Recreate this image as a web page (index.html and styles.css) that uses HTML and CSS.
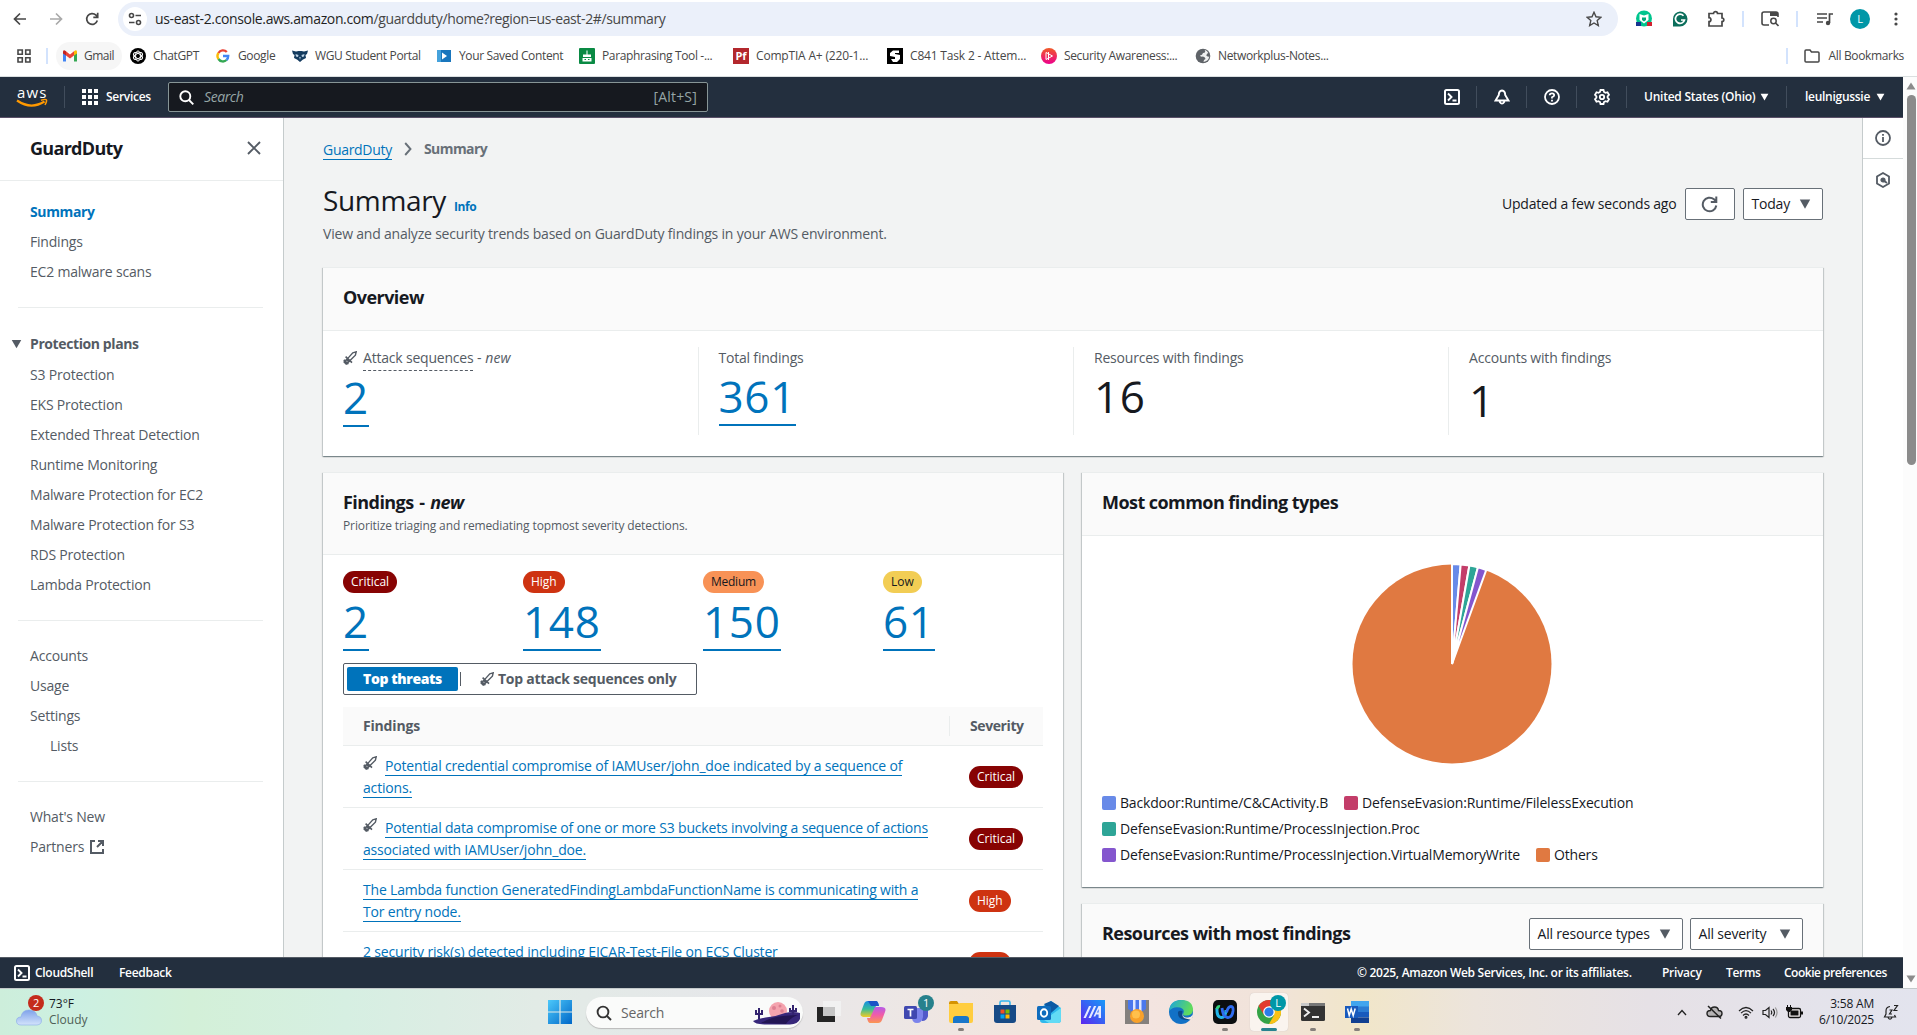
FILE: index.html
```html
<!DOCTYPE html>
<html lang="en">
<head>
<meta charset="utf-8">
<title>GuardDuty | us-east-2</title>
<link rel="stylesheet" href="styles.css">
</head>
<body>
<svg width="0" height="0" class="defs">
  <symbol id="sword" viewBox="0 0 14 14"><path d="M4.800 7.400 9.800 1.800 13.200.8l-.8 3.400L7 9.600" fill="none" stroke="#545b64" stroke-width="1.400"/><path d="M2.600 5.600l6.400 6M4.800 7.400 1.200 11l2 2L7 9.600M.8 8.800l4.600 4.400M5.800 10.800 3.200 8.200" fill="none" stroke="#545b64" stroke-width="1.600"/></symbol>
  <symbol id="caret" viewBox="0 0 12 10"><path d="M.8 .5h10.4L6 9.7z" fill="currentColor"/></symbol>
  <symbol id="shell" viewBox="0 0 16 16"><rect x="1" y="1" width="14" height="14" rx="1.5" fill="none" stroke="#fff" stroke-width="2"/><path d="M4 4.5 7.5 8 4 11.500M8.500 11.500h4" fill="none" stroke="#fff" stroke-width="1.900"/></symbol>
</svg>

<header class="browser">
  <div class="toolbar">
    <svg class="tb-back" width="14" height="14" viewBox="0 0 14 14"><path d="M13 7H2M7 1.500 1.500 7 7 12.500" fill="none" stroke="#474747" stroke-width="1.700"/></svg>
    <svg class="tb-fwd" width="14" height="14" viewBox="0 0 14 14"><path d="M1 7h11M7 1.500 12.500 7 7 12.500" fill="none" stroke="#a9a9a9" stroke-width="1.700"/></svg>
    <svg class="tb-reload" width="14" height="14" viewBox="0 0 14 14"><path d="M12.300 8.500A5.400 5.400 0 1 1 11 3.200L12.500 4.800M12.700 .8v4.500H8.300" fill="none" stroke="#474747" stroke-width="1.700"/></svg>
    <div class="urlbar">
      <span class="site"><svg width="14" height="14" viewBox="0 0 14 14" fill="none" stroke="#474747" stroke-width="1.600"><circle cx="3.500" cy="3.500" r="2"/><path d="M7.500 3.500H13M1 10.500h5.500"/><circle cx="10.500" cy="10.500" r="2"/></svg></span>
      <span class="url"><b>us-east-2.console.aws.amazon.com</b>/guardduty/home?region=us-east-2#/summary</span>
      <svg width="16" height="16" viewBox="0 0 16 16"><path d="m8 1.300 2 4.500 4.900.5-3.700 3.300 1.100 4.900L8 12l-4.300 2.500 1.100-4.900L1.100 6.300 6 5.800z" fill="none" stroke="#474747" stroke-width="1.400"/></svg>
    </div>
    <div class="exts">
      <svg width="18" height="18" viewBox="0 0 18 18"><circle cx="9" cy="8.500" r="8" fill="#00c58e"/><path d="M4.500 4 9 5.500 13.500 4v6L9 13.500 4.500 10z" fill="#fff"/><path d="M7 7.500h4v2.500L9 11.500 7 10z" fill="#00a87a"/><path d="M1 12h5v4H1z" fill="#17338f"/><path d="M12 12h5v4h-5z" fill="#d2202f"/></svg>
      <svg width="16" height="16" viewBox="0 0 16 16"><path d="M8 .5A7.500 7.500 0 1 1 8 15.500H1V8A7.500 7.500 0 0 1 8 .5z" fill="#0b6e5b"/><path d="M11.500 4.700A4.600 4.600 0 1 0 12.500 9H9" fill="none" stroke="#fff" stroke-width="1.700"/></svg>
      <svg width="18" height="18" viewBox="0 0 18 18"><path d="M2 3.500h4.500c0-2.600 4-2.600 4 0H15v4.500c2.400 0 2.400 3.500 0 3.500V16H2v-4.300c2.600 0 2.600-4 0-4z" fill="none" stroke="#474747" stroke-width="1.700"/></svg>
      <i></i>
      <svg width="18" height="16" viewBox="0 0 18 16"><path d="M8 14H3q-2 0-2-2V3q0-2 2-2h12q2 0 2 2v3" fill="none" stroke="#474747" stroke-width="1.600"/><path d="M9 1h8v4H9z" fill="#474747"/><circle cx="12.500" cy="10" r="2.700" fill="none" stroke="#474747" stroke-width="1.500"/><path d="m14.500 12 3 3" stroke="#474747" stroke-width="1.600"/></svg>
      <i></i>
      <svg class="media" width="16" height="14" viewBox="0 0 16 14"><path d="M0 2h10M0 6h10M0 10h6M12.500 11V2H16" fill="none" stroke="#474747" stroke-width="1.700"/><circle cx="11" cy="11" r="2.200" fill="#474747"/></svg>
      <span class="avatar">L</span>
      <svg width="4" height="14" viewBox="0 0 4 14" fill="#474747"><circle cx="2" cy="2" r="1.600"/><circle cx="2" cy="7" r="1.600"/><circle cx="2" cy="12" r="1.600"/></svg>
    </div>
  </div>
  <div class="bookmarks">
    <svg width="14" height="14" viewBox="0 0 14 14" fill="none" stroke="#474747" stroke-width="1.600"><path d="M1 1h4.300v4.300H1zM8.700 1H13v4.300H8.700zM1 8.700h4.300V13H1zM8.700 8.700H13V13H8.700z"/></svg>
    <i></i>
    <a class="hover"><svg width="16" height="16" viewBox="0 0 16 16"><path d="M1 4v9h3V7l4 3 4-3v6h3V4" fill="#fff"/><path d="M1 13.500V4l3 2.200v7.300z" fill="#4285f4"/><path d="M15 13.500V4l-3 2.200v7.300z" fill="#34a853"/><path d="M4 3.200l4 3.200 4-3.200v4.400L8 10.600 4 7.600z" fill="#ea4335"/><path d="M12 3.200q3-2 3 .8v1.500l-3 2.100z" fill="#fbbc04"/><path d="M4 3.200Q1 1.200 1 4v1.500l3 2.100z" fill="#c5221f"/></svg>Gmail</a>
    <a><svg width="16" height="16" viewBox="0 0 16 16"><circle cx="8" cy="8" r="8" fill="#000"/><g fill="none" stroke="#fff" stroke-width="1"><ellipse cx="8" cy="8" rx="2.400" ry="5"/><ellipse cx="8" cy="8" rx="2.400" ry="5" transform="rotate(60 8 8)"/><ellipse cx="8" cy="8" rx="2.400" ry="5" transform="rotate(120 8 8)"/></g></svg>ChatGPT</a>
    <a><svg width="16" height="16" viewBox="0 0 16 16" fill="none" stroke-width="2.400"><path d="M3.500 5A5.200 5.200 0 0 1 11.800 4" stroke="#ea4335"/><path d="M3.500 5a5.200 5.200 0 0 0 0 6" stroke="#fbbc05"/><path d="M3.500 11A5.200 5.200 0 0 0 11.500 12" stroke="#34a853"/><path d="M8 8h5.200q0 2.600-1.700 4" stroke="#4285f4"/></svg>Google</a>
    <a><svg width="16" height="16" viewBox="0 0 16 16"><path d="M0 2.500l4 1 2.500-.5h3l2.500.5 4-1-1 3.500-1.500 1L14 10l-3 1.500-3 2.500-3-2.500L2 10l.5-3L1 6z" fill="#143b5f"/><path d="M3.500 6l3 1-.5 2-2-.5zM12.500 6l-3 1 .5 2 2-.5zM7.300 9h1.400L8 12z" fill="#bcd3e6"/></svg>WGU Student Portal</a>
    <a><svg width="16" height="16" viewBox="0 0 16 16"><path d="M1 2h14v12H1z" fill="#1976bd"/><path d="M1 2h4v12H1z" fill="#45a2dc"/><path d="m6 4.500 5 3.500-5 3.500z" fill="#fff"/></svg>Your Saved Content</a>
    <a><svg width="16" height="16" viewBox="0 0 16 16"><rect width="16" height="16" rx="1" fill="#0a8a44"/><path d="M4 6.500h8v2.500H4zM3.500 10h9v3.500h-9zM7.500 2.500h1V7h-1z" fill="#fff"/><path d="M5.500 11h1.500v1H5.500zM9 11h1.500v1H9z" fill="#0a8a44"/></svg>Paraphrasing Tool -...</a>
    <a class="loose"><span class="fav-pf">Pf</span>CompTIA A+ (220-1...</a>
    <a class="loose"><svg width="16" height="16" viewBox="0 0 16 16"><path d="M0 0h16v16H0z" fill="#000"/><path d="M12 2.500H6L3 5v3l5 1v2H4l2 3h4l3-3V7L8 6V5h4z" fill="#fff"/></svg>C841 Task 2 - Attem...</a>
    <a><svg width="16" height="16" viewBox="0 0 16 16"><linearGradient id="ps" x2="0" y2="1"><stop stop-color="#f05a28"/><stop offset="1" stop-color="#ec008c"/></linearGradient><circle cx="8" cy="8" r="8" fill="url(#ps)"/><path d="m5 4.500 6.500 3.500L5 11.500zM7.500 4v8" fill="none" stroke="#fff" stroke-width="1"/></svg>Security Awareness:...</a>
    <a><svg width="16" height="16" viewBox="0 0 16 16"><circle cx="8" cy="8" r="7.300" fill="#5f6368"/><path d="M9.500 1.800q2 3-1.500 3.200-.5 2-3 2.500 0 1.500 3 1 2.500.5 2.500 2.500-2 .5-2 3 5-1 5.800-5.500-2 .5-3-1 .5-2.500 2-2.500Q12.300 2.500 9.500 1.800z" fill="#fff" opacity=".9"/></svg>Networkplus-Notes...</a>
    <i></i>
    <svg width="16" height="14" viewBox="0 0 16 14"><path d="M1 12V2q0-1 1-1h4l1.500 2H14q1 0 1 1v8q0 1-1 1H2q-1 0-1-1z" fill="none" stroke="#474747" stroke-width="1.500"/></svg>
    <span class="all">All Bookmarks</span>
  </div>
</header>

<div class="page">
  <div class="console">
    <nav class="awsnav">
      <svg class="logo" width="32" height="20" viewBox="0 0 32 20"><text x="1" y="10.500" class="logo-text" textLength="29">aws</text><path d="M1 13.500Q15 23 28.500 14.500" fill="none" stroke="#f90" stroke-width="2.200"/><path d="M25 13.200q5-1.500 5.500-.2t-1.500 5" fill="none" stroke="#f90" stroke-width="1.500"/></svg>
      <i class="d1"></i>
      <svg class="apps" width="16" height="16" viewBox="0 0 16 16" fill="#fff"><path d="M0 0h4v4H0zM6 0h4v4H6zM12 0h4v4h-4zM0 6h4v4H0zM6 6h4v4H6zM12 6h4v4h-4zM0 12h4v4H0zM6 12h4v4H6zM12 12h4v4h-4z"/></svg>
      <span class="services">Services</span>
      <div class="search">
        <svg width="15" height="15" viewBox="0 0 15 15" fill="none" stroke="#fff" stroke-width="1.900"><circle cx="6.300" cy="6.300" r="5"/><path d="m10 10 4.300 4.300"/></svg>
        <em>Search</em><span>[Alt+S]</span>
      </div>
      <div class="navicons">
        <span><svg width="16" height="16"><use href="#shell"/></svg></span>
        <span><svg width="16" height="16" viewBox="0 0 16 16" fill="none" stroke="#fff" stroke-width="1.900"><path d="M8 1.500Q4.800 2 4.800 6L1.500 11.500h13L11.200 6Q11.200 2 8 1.500zM5.800 12v1q2.200 3.300 4.400 0v-1"/></svg></span>
        <span><svg width="16" height="16" viewBox="0 0 16 16" fill="none" stroke="#fff" stroke-width="1.800"><circle cx="8" cy="8" r="7"/><path d="M5.700 6.300Q5.800 4.300 8 4.300T10.200 6.300Q10.200 7.300 8 8.300V9.500M8 10.800v1.600"/></svg></span>
        <span><svg width="16" height="16" viewBox="0 0 16 16" fill="none" stroke="#fff" stroke-width="1.800"><path d="M6.500 1h3l.5 2 1.500.8 2-.6L15 5.800 13.600 7.300v1.400L15 10.200l-1.500 2.600-2-.6-1.500.8-.5 2h-3L6 13l-1.500-.8-2 .6L1 10.200 2.400 8.700V7.300L1 5.800l1.500-2.600 2 .6L6 3z"/><circle cx="8" cy="8" r="2.200"/></svg></span>
      </div>
      <span class="region">United States (Ohio)<svg width="9" height="8"><use href="#caret"/></svg></span>
      <span class="user">leulnigussie<svg width="9" height="8"><use href="#caret"/></svg></span>
    </nav>

    <div class="body">
      <aside class="sidebar">
        <div class="side-head">GuardDuty<svg width="14" height="14" viewBox="0 0 14 14"><path d="m1 1 12 12M13 1 1 13" stroke="#545b64" stroke-width="1.900"/></svg></div>
        <ul class="first"><li class="current">Summary</li><li>Findings</li><li>EC2 malware scans</li></ul>
        <hr>
        <div class="group"><svg width="11" height="10"><use href="#caret"/></svg>Protection plans</div>
        <ul><li>S3 Protection</li><li>EKS Protection</li><li>Extended Threat Detection</li><li>Runtime Monitoring</li><li>Malware Protection for EC2</li><li>Malware Protection for S3</li><li>RDS Protection</li><li>Lambda Protection</li></ul>
        <hr>
        <ul class="spaced"><li>Accounts</li><li>Usage</li><li>Settings</li><li class="sub">Lists</li></ul>
        <hr>
        <ul class="spaced"><li>What's New</li><li>Partners<svg width="14" height="14" viewBox="0 0 14 14" fill="none" stroke="#545b64" stroke-width="2"><path d="M5 1H1v12h12V9M8 1h5v5M13 1 7 7"/></svg></li></ul>
      </aside>

      <main>
        <div class="crumbs"><a>GuardDuty</a><svg width="8" height="14" viewBox="0 0 8 14"><path d="m1.200 1 5.300 6-5.300 6" fill="none" stroke="#687078" stroke-width="1.900"/></svg><b>Summary</b></div>
        <div class="titlebar">
          <div>
            <h1>Summary <a>Info</a></h1>
            <p>View and analyze security trends based on GuardDuty findings in your AWS environment.</p>
          </div>
          <div class="actions">
            <span>Updated a few seconds ago</span>
            <button class="refresh"><svg width="17" height="17" viewBox="0 0 17 17" fill="none" stroke="#545b64" stroke-width="2"><path d="M15.300 9.500A6.800 6.800 0 1 1 13 3.300L15 5.300M15.300 .5v5.500H9.800"/></svg></button>
            <button class="today">Today<svg width="12" height="10"><use href="#caret"/></svg></button>
          </div>
        </div>

        <section class="card overview">
          <h2>Overview</h2>
          <div class="stats">
            <div><label><svg width="14" height="14"><use href="#sword"/></svg><u>Attack sequences</u>&nbsp;-&nbsp;<em>new</em></label><a class="num">2</a></div>
            <div><label>Total findings</label><a class="num up">361</a></div>
            <div><label>Resources with findings</label><span class="num up">16</span></div>
            <div><label>Accounts with findings</label><span class="num down">1</span></div>
          </div>
        </section>

        <div class="columns">
          <section class="card findings">
            <div class="fhead"><h2>Findings - <em>new</em></h2><p>Prioritize triaging and remediating topmost severity detections.</p></div>
            <div class="fbody">
              <div class="sev">
                <div><span class="badge critical">Critical</span><a class="num">2</a></div>
                <div><span class="badge high">High</span><a class="num">148</a></div>
                <div><span class="badge medium">Medium</span><a class="num">150</a></div>
                <div><span class="badge low">Low</span><a class="num">61</a></div>
              </div>
              <div class="toggle"><b>Top threats</b><i></i><span><svg width="14" height="14"><use href="#sword"/></svg>Top attack sequences only</span></div>
              <div class="table">
                <div class="row th"><span>Findings</span><span>Severity</span></div>
                <div class="row"><span><svg width="14" height="14"><use href="#sword"/></svg><a>Potential credential compromise of IAMUser/john_doe indicated by a sequence of<br>actions.</a></span><span><i class="badge critical">Critical</i></span></div>
                <div class="row"><span><svg width="14" height="14"><use href="#sword"/></svg><a>Potential data compromise of one or more S3 buckets involving a sequence of actions<br>associated with IAMUser/john_doe.</a></span><span><i class="badge critical">Critical</i></span></div>
                <div class="row"><span><a>The Lambda function GeneratedFindingLambdaFunctionName is communicating with a<br>Tor entry node.</a></span><span><i class="badge high">High</i></span></div>
                <div class="row"><span><a>2 security risk(s) detected including EICAR-Test-File on ECS Cluster</a></span><span><i class="badge high">High</i></span></div>
              </div>
            </div>
          </section>

          <div class="rightcol">
            <section class="card types">
              <h2>Most common finding types</h2>
              <svg class="pie" width="202" height="202" viewBox="-101 -101 202 202" stroke="#fff" stroke-width="2">
                <circle r="99.500" fill="#e07941" stroke="none"/>
                <path d="M0 0V-100A100 100 0 0 1 8.700-99.600z" fill="#688ae8"/>
                <path d="M0 0 8.700-99.600A100 100 0 0 1 17.400-98.500z" fill="#c33d69"/>
                <path d="M0 0 17.400-98.500A100 100 0 0 1 25.900-96.600z" fill="#2ea597"/>
                <path d="M0 0 25.900-96.600A100 100 0 0 1 34.200-94z" fill="#8456ce"/>
              </svg>
              <div class="legend">
                <span><i class="c1"></i>Backdoor:Runtime/C&amp;CActivity.B</span><span><i class="c2"></i>DefenseEvasion:Runtime/FilelessExecution</span>
                <span class="full"><i class="c3"></i>DefenseEvasion:Runtime/ProcessInjection.Proc</span>
                <span><i class="c4"></i>DefenseEvasion:Runtime/ProcessInjection.VirtualMemoryWrite</span><span><i class="c5"></i>Others</span>
              </div>
            </section>
            <section class="card resources">
              <h2>Resources with most findings</h2>
              <button class="rt">All resource types<svg width="12" height="10"><use href="#caret"/></svg></button>
              <button class="as">All severity<svg width="12" height="10"><use href="#caret"/></svg></button>
            </section>
          </div>
        </div>
      </main>

      <aside class="tools">
        <span><svg width="16" height="16" viewBox="0 0 16 16" fill="none" stroke="#545b64" stroke-width="1.800"><circle cx="8" cy="8" r="7"/><path d="M8 7v5M8 4v1.700"/></svg></span>
        <span><svg width="16" height="16" viewBox="0 0 16 16" fill="none" stroke="#545b64" stroke-width="1.800"><path d="M8 1l6 3.400v7.200L8 15l-6-3.400V4.400z"/><circle cx="8" cy="8" r="1.700" fill="#545b64"/><path d="m8 8 4 3"/></svg></span>
      </aside>
    </div>

    <footer>
      <svg width="16" height="16"><use href="#shell"/></svg>
      <span class="cs">CloudShell</span><span class="fb">Feedback</span>
      <span class="copy">© 2025, Amazon Web Services, Inc. or its affiliates.</span><span class="pr">Privacy</span><span class="te">Terms</span><span class="ck">Cookie preferences</span>
    </footer>
  </div>
  <div class="scrollbar">
    <svg width="10" height="8" viewBox="0 0 10 8"><path d="M5 0.500 9.500 7.500H.5z" fill="#8b8b8b"/></svg>
    <div></div>
    <svg class="dn" width="10" height="8" viewBox="0 0 10 8"><path d="M5 7.500.5.500h9z" fill="#8b8b8b"/></svg>
  </div>
</div>

<div class="taskbar">
  <div class="weather">
    <div class="wicon"><svg width="26" height="18" viewBox="0 0 26 18"><linearGradient id="cl" x2="0" y2="1"><stop stop-color="#7fa2ea"/><stop offset="1" stop-color="#d3e3fb"/></linearGradient><path d="M5 17q-4.500 0-4.500-4T5 9q1-7 8-7t8 6q4.500.5 4.500 4.500T21 17z" fill="url(#cl)" stroke="#86a8ea" stroke-width=".6"/></svg><span>2</span></div>
    <p>73°F<br><small>Cloudy</small></p>
  </div>
  <svg class="win" width="24" height="24" viewBox="0 0 24 24"><linearGradient id="w" x2="1" y2="1"><stop stop-color="#4cc8fa"/><stop offset="1" stop-color="#0067c8"/></linearGradient><path d="M0 0h11.400v11.400H0zM12.600 0H24v11.400H12.600zM0 12.600h11.400V24H0zM12.600 12.600H24V24H12.600z" fill="url(#w)"/></svg>
  <div class="tsearch">
    <svg width="16" height="16" viewBox="0 0 16 16" fill="none" stroke="#333" stroke-width="1.900"><circle cx="7" cy="7" r="5.400"/><path d="m11 11 4 4"/></svg>
    <span>Search</span>
    <svg width="48" height="24" viewBox="0 0 48 24"><circle cx="25" cy="10" r="9" fill="#f4a3ae"/><circle cx="21" cy="7" r="2" fill="#dd7f92"/><circle cx="27" cy="5" r="1.500" fill="#dd7f92"/><circle cx="29" cy="10" r="1.800" fill="#dd7f92"/><path d="M0 20q8-3 16-4T32 12q8-2 15 0v6q-2 5-10 5.500H14Q2 23.500 0 20z" fill="#37277a"/><path d="M8 22q10-6 22-7t15-1q-8 3-12 9z" fill="#221553"/><path d="M6 18V7M3 9v4h6V9M40 14V4M37 7v3h6V7" fill="none" stroke="#33246f" stroke-width="2"/></svg>
  </div>
  <div class="apps-row">
    <span><svg width="24" height="24" viewBox="0 0 24 24"><path d="M0 7h18v15H0z" fill="#242424"/><path d="M6 1h18v15H6z" fill="#f1f1f1"/><path d="M6 7h12v9H6z" fill="#c5c5c5"/></svg></span>
    <span><svg width="26" height="24" viewBox="0 0 26 24"><linearGradient id="ca" x2="0" y2="1"><stop stop-color="#168de2"/><stop offset=".5" stop-color="#37bd9a"/><stop offset="1" stop-color="#f3cb24"/></linearGradient><linearGradient id="cb" x2="0" y2="1"><stop stop-color="#b55be8"/><stop offset=".5" stop-color="#f15ca8"/><stop offset="1" stop-color="#fb9750"/></linearGradient><path d="M8 1h8q2 0 3 5h-3l-5 11H5q-6 0-4-5L4 4q1-3 4-3z" fill="url(#ca)"/><path d="M18 23h-8q-2 0-3-5h3l5-11h6q6 0 4 5l-3 8q-1 3-4 3z" fill="url(#cb)"/><path d="M8 1h8q2 0 3 5h-8z" fill="#1a53c6"/></svg></span>
    <span class="teams"><svg width="26" height="24" viewBox="0 0 26 24"><path d="M15 8h9v8q-1 5-6 5z" fill="#5059c9"/><path d="M8 8h11v9q-1 6-6 6t-5-6z" fill="#7b83eb"/><rect y="6" width="13" height="13" rx="1.500" fill="#4048b0"/><path d="M3.500 9.500h6M6.500 9.500v7" stroke="#fff" stroke-width="1.700"/></svg><em class="bdg">1</em></span>
    <span class="run"><svg width="24" height="24" viewBox="0 0 24 24"><path d="M0 3q0-2 2-2h6l2 3H0z" fill="#d59300"/><path d="M0 4h9l2-1h13v18q0 2-2 2H2q-2 0-2-2z" fill="#ffcd3f"/><path d="M4 23v-4q0-3 3-3h10q3 0 3 3v4z" fill="#1876c9"/></svg></span>
    <span><svg width="24" height="24" viewBox="0 0 24 24"><path d="M7 6V2.500Q7 1 8.500 1h7Q17 1 17 2.500V6" fill="none" stroke="#35b6ef" stroke-width="1.600"/><path d="M1 5h22v15q0 3-3 3H4q-3 0-3-3z" fill="#164a86"/><path d="M7.500 9.500h4v4h-4z" fill="#f25022"/><path d="M12.500 9.500h4v4h-4z" fill="#7fba00"/><path d="M7.500 14.500h4v4h-4z" fill="#00a4ef"/><path d="M12.500 14.500h4v4h-4z" fill="#ffb900"/></svg></span>
    <span><svg width="24" height="24" viewBox="0 0 24 24"><path d="M3 8 14 1l10 7v12q0 3-3 3H6q-3 0-3-3z" fill="#2fb9ec"/><path d="m7 4 7-3 8 5-8 7z" fill="#0c59a4"/><path d="m24 8-17 12 5 3h9q3 0 3-3z" fill="#62dbf5"/><rect y="6" width="14" height="14" rx="1.500" fill="#0f6cbd"/><ellipse cx="7" cy="13" rx="3.200" ry="3.700" fill="none" stroke="#fff" stroke-width="1.900"/></svg></span>
    <span><svg width="24" height="24" viewBox="0 0 24 24"><linearGradient id="my" x1="1" x2="0" y2="1"><stop stop-color="#169af8"/><stop offset="1" stop-color="#5b25ee"/></linearGradient><path d="M0 0h24v24H0z" fill="url(#my)"/><path d="M2.500 18 8 6h2.300L4.800 18zM7.500 18 13 6h2.300L9.800 18zM12.500 16.500 17.500 6H20v12h-2.400v-3.500h-2.400l-.9 2zM16 12.500h1.600V9z" fill="#e6eaff"/></svg></span>
    <span><svg width="24" height="24" viewBox="0 0 24 24"><path d="M0 0h24v24H0z" fill="#84807d"/><path d="M3 0h18v9l-5 3H8L3 9z" fill="#4b78ec"/><path d="M8 0h2.500v11H8zM14 0h2.500v11H14z" fill="#dfe8ff"/><circle cx="12" cy="16" r="7" fill="#f8a12a"/><circle cx="11" cy="14.500" r="4" fill="#ffc04c"/></svg></span>
    <span><svg width="24" height="24" viewBox="0 0 24 24"><linearGradient id="eg" x2="1" y2=".3"><stop stop-color="#1ba3df"/><stop offset="1" stop-color="#61dc5b"/></linearGradient><circle cx="12" cy="12" r="12" fill="#1271c6"/><path d="M0 11Q1 0 12.500 0T24 10.500Q23 16 16 15.500q-3-.5-1.500-2.500Q16 9 11 7.500 4 6 0 11z" fill="url(#eg)"/><path d="M9 12q-1 9 12 8l2.500-3Q21 18 18 17.500 12 17 13.500 11 10 10 9 12z" fill="#0b4a8c"/><path d="M14 13q-1 5 5 4.500 3-.2 5-3l-1.500 5.500-4-1Q12 18 14 13z" fill="#f2e9e3"/></svg></span>
    <span class="run"><svg width="24" height="24" viewBox="0 0 24 24"><rect width="24" height="24" rx="5" fill="#0b0e10"/><path d="M4 8q-.5 9 4 9.500T13 10" fill="none" stroke="#22b5ea" stroke-width="3"/><path d="M9 8q1 9 5.500 9.500Q19 18 20 11q.5-4.500-2-4.500-3 0-4.500 6" fill="none" stroke="#2f6cf0" stroke-width="2.800"/><path d="M4 9q.5-3 3-2.500" fill="none" stroke="#35cf77" stroke-width="2.800"/></svg></span>
    <span class="run active"><svg width="24" height="24" viewBox="0 0 24 24"><circle cx="12" cy="12" r="12" fill="#34a346"/><path d="M1.600 6A12 12 0 0 1 22.400 6H12z" fill="#e23b2e"/><path d="M1.600 6 7 15l5-9z" fill="#e23b2e"/><path d="M22.400 6A12 12 0 0 1 12 24l5.200-9L12 6z" fill="#fbc116"/><circle cx="12" cy="12" r="5.800" fill="#fff"/><circle cx="12" cy="12" r="4.600" fill="#2b7de9"/></svg><em class="bdg lt">L</em></span>
    <span class="run"><svg width="24" height="20" viewBox="0 0 24 20"><rect y="1" width="24" height="18" rx="1.500" fill="#333"/><path d="M0 1h8v3H0z" fill="#c9c9c9"/><path d="M8 1h16v3H8z" fill="#777"/><path d="m3 6.500 5 4-5 4M11 15h7" fill="none" stroke="#eee" stroke-width="1.900"/></svg></span>
    <span class="run"><svg width="24" height="24" viewBox="0 0 24 24"><path d="M6 1h18v6H6z" fill="#41a5ee"/><path d="M6 6.500h18V12H6z" fill="#2b7cd3"/><path d="M6 12h18v5.500H6z" fill="#185abd"/><path d="M6 17.500h18V23H6z" fill="#103f91"/><path d="M0 6h13v12H0z" fill="#185abd"/><path d="m2.500 8.500 1.700 7 2-6.500 2 6.500 2-7" fill="none" stroke="#fff" stroke-width="1.500"/></svg></span>
  </div>
  <div class="tray">
    <svg width="10" height="7" viewBox="0 0 10 7"><path d="m1 6 4-4.500L9 6" fill="none" stroke="#222" stroke-width="1.300"/></svg>
    <svg class="t2" width="17" height="14" viewBox="0 0 17 14"><path d="M4.500 11.500Q1 11.500 1 8.500t3.500-3Q5 2 8.500 2t4 3.500q3.500 0 3.500 3t-3 3z" fill="#b5b3b4" stroke="#222" stroke-width="1.400"/><path d="m2 1 13 12.500" stroke="#222" stroke-width="1.500"/></svg>
    <svg class="t3" width="16" height="13" viewBox="0 0 16 13" fill="none" stroke="#222" stroke-width="1.200"><path d="M1 5q7-7 14 0M3 7.200q5-5 10 0M5 9.500q3-3 6 0"/><circle cx="8" cy="11.300" r=".9"/></svg>
    <svg class="t4" width="16" height="13" viewBox="0 0 16 13" fill="none" stroke="#222" stroke-width="1.200"><path d="M1 4.500h2.500L7 1.500v10L3.500 8.500H1zM9 4.500q1.500 2 0 4M11 3q3 3.500 0 7"/><path d="M13.300 1.500q3.500 5 0 10" stroke="#999"/></svg>
    <svg class="t5" width="17" height="14" viewBox="0 0 17 14"><rect x="2.500" y="3.500" width="12" height="9" rx="1.500" fill="#f3eeee" stroke="#111" stroke-width="1.300"/><path d="M4.500 5.500h8v5h-8z" fill="#111"/><path d="M15 6.500h2v3h-2zM0 2h6v3L4 7H2L0 5zM1 0h1v2H1zM4 0h1v2H4z" fill="#111"/></svg>
    <p>3:58 AM<br>6/10/2025</p>
    <svg class="t6" width="16" height="17" viewBox="0 0 16 17" fill="none" stroke="#222" stroke-width="1.200"><path d="M7 2.500Q3 3 3 7v3l-1.500 3h11L11.500 11M5 13.500q2 3.500 4 0M6.500 6H9L6.500 10H9M11 1.500h3.500L11 6.500h3.500"/></svg>
  </div>
</div>
</body>
</html>
```
FILE: styles.css
```css
* { box-sizing: border-box; }
body { margin: 0; width: 1917px; height: 1035px; overflow: hidden; font: 14px/22px "Open Sans", sans-serif; letter-spacing: -.2px; color: #16191f; background: #fff; display: flex; flex-direction: column; }
svg { display: block; flex: none; }
span, a { white-space: nowrap; }
h1, h2, p, ul, hr { margin: 0; padding: 0; }
.defs { position: absolute; }
i { font-style: normal; }

/* browser chrome */
.browser { height: 77px; flex: none; border-bottom: 1px solid #dadfe0; font-size: 12px; letter-spacing: -.35px; color: #474747; }
.toolbar { height: 38px; display: flex; align-items: center; padding-left: 13px; }
.tb-fwd { margin-left: 22px; }
.tb-reload { margin-left: 22px; }
.urlbar { margin-left: 19px; width: 1500px; height: 34px; border-radius: 17px; background: #ebf0fa; display: flex; align-items: center; padding: 0 16px 0 5px; }
.site { width: 24px; height: 24px; border-radius: 50%; background: #fff; display: grid; place-items: center; }
.url { flex: 1; margin-left: 8px; font-size: 14px; letter-spacing: -.36px; }
.url b { font-weight: 400; color: #1f1f1f; }
.exts { display: flex; align-items: center; padding-left: 17px; }
.exts svg + svg { margin-left: 19px; }
.exts i { width: 2px; height: 16px; background: #d3e3fd; margin: 0 17px; }
.exts .media { margin-left: 2px; }
.avatar { width: 20px; height: 20px; border-radius: 50%; background: #0097a7; color: #fff; text-align: center; line-height: 20px; font-size: 11px; margin: 0 24px 0 17px; }
.bookmarks { height: 36px; display: grid; align-items: center; grid-template-columns: 34px 9px 75px 85px 77px 144px 143px 154px 154px 154px 154px 591px 18px 16px 1fr; padding-left: 12px; }
.bookmarks > svg:first-child { margin-left: 5px; }
.bookmarks > i { width: 2px; height: 16px; background: #d3e3fd; }
.bookmarks a { display: flex; align-items: center; gap: 7px; height: 28px; }
.bookmarks a svg { width: 16px; }
.bookmarks .hover { background: #f6f6f6; border-radius: 14px; width: 66px; margin-left: 1px; padding-left: 6px; gap: 6px; letter-spacing: -.5px; }
.bookmarks .loose { letter-spacing: -.18px; }
.all { text-align: right; padding-right: 13px; }
.fav-pf { width: 16px; height: 16px; background: #b3282d; color: #fff; font-weight: 700; font-size: 11px; line-height: 15px; text-align: center; }

/* page frame */
.page { height: 911px; display: flex; flex: none; }
.console { width: 1903px; display: flex; flex-direction: column; }
.scrollbar { width: 14px; background: #fcfcfc; display: flex; flex-direction: column; align-items: center; padding: 5px 0 5px 2px; }
.scrollbar div { width: 9px; height: 370px; border-radius: 5px; background: #8b8b8b; margin-top: 5px; }
.scrollbar .dn { margin-top: auto; }

/* AWS navigation */
.awsnav { height: 41px; flex: none; background: #232f3e; border-bottom: 1px solid #5a5068; display: flex; align-items: center; color: #fff; font-size: 12px; font-weight: 600; letter-spacing: -.28px; }
.logo { margin-left: 16px; overflow: visible; }
.logo-text { font: 500 15px "Open Sans", sans-serif; fill: #fff; }
.awsnav i { width: 1px; height: 22px; background: #414d5c; margin: 0 17px 0 16px; }
.services { width: 62px; padding-left: 8px; }
.search { margin-left: 8px; width: 540px; height: 30px; background: #16191f; border: 1px solid #879596; border-radius: 2px; display: flex; align-items: center; padding: 0 10px; font-weight: 400; font-size: 14px; color: #95a5a6; letter-spacing: -.2px; }
.search em { margin-left: 10px; flex: 1; letter-spacing: -.4px; }
.search span { letter-spacing: .2px; }
.navicons { display: flex; margin-left: auto; }
.navicons span { width: 50px; height: 22px; border-right: 1px solid #414d5c; display: grid; place-items: center; }
.region, .user { display: flex; align-items: center; justify-content: space-between; height: 22px; }
.region { width: 160px; padding: 0 17px; border-right: 1px solid #414d5c; letter-spacing: -.25px; }
.user { width: 116px; padding: 0 18px; }

.body { flex: 1; min-height: 0; display: flex; background: #f2f3f3; }
.sidebar { width: 284px; flex: none; background: #fff; border-right: 1px solid #c5cbcc; color: #545b64; }
.side-head { height: 63px; border-bottom: 1px solid #eaeded; display: flex; align-items: center; justify-content: space-between; padding: 0 22px 2px 30px; font-size: 18px; font-weight: 700; letter-spacing: -.7px; color: #16191f; }
.sidebar ul { list-style: none; }
.sidebar li { height: 30px; line-height: 30px; padding-left: 30px; display: flex; align-items: center; gap: 6px; }
.sidebar .first { padding: 16px 0 20px; }
.sidebar .spaced { padding: 20px 0; }
.sidebar .sub { padding-left: 50px; }
.sidebar .current { color: #0073bb; font-weight: 700; letter-spacing: -.35px; }
.sidebar hr { border: 0; height: 1px; background: #eaeded; margin: 0 20px 0 18px; }
.group { display: flex; align-items: center; gap: 8px; padding-left: 11px; margin-top: 25px; height: 22px; margin-bottom: 5px; font-weight: 700; letter-spacing: -.4px; }
.group + ul { padding-bottom: 20px; }

main { flex: 1; min-width: 0; overflow: hidden; padding: 0 39.5px 0 39px; }
main a, .row a { color: #0073bb; }
.crumbs { display: flex; align-items: center; height: 22px; margin-top: 20px; color: #687078; }
.crumbs a { border-bottom: 1px solid #0073bb; line-height: 19px; padding-top: 1px; letter-spacing: -.3px; }
.crumbs svg { margin: 0 12px; }
.crumbs b { letter-spacing: -.55px; }
.titlebar { display: flex; justify-content: space-between; margin-top: 22px; }
h1 { font-size: 28px; line-height: 36px; height: 36px; font-weight: 400; letter-spacing: -.35px; }
h1 a { font-size: 12px; font-weight: 700; margin-left: 1px; }
.titlebar p { line-height: 22px; color: #545b64; padding-top: 5px; }
.actions { display: flex; align-items: center; height: 32px; margin-top: 6px; }
.actions > span { padding-bottom: 1px; }
button { font: inherit; letter-spacing: inherit; color: #16191f; background: #fff; border: 1px solid #687078; border-radius: 2px; height: 32px; display: flex; align-items: center; justify-content: space-between; padding: 0 11px 0 8px; white-space: nowrap; }
button svg { color: #545b64; }
.refresh { width: 50px; margin: 0 8px; padding: 0; justify-content: center; }
.today { width: 80px; }

.card { background: #fff; border-top: 1px solid #eaeded; box-shadow: 0 1px 1px 0 rgba(0,28,36,.3), 1px 1px 1px 0 rgba(0,28,36,.15), -1px 1px 1px 0 rgba(0,28,36,.15); }
h2 { font-size: 18px; line-height: 22px; letter-spacing: -.55px; font-weight: 700; }
.overview > h2, .types > h2 { height: 63px; padding: 17.500px 20px; background: #fafafa; border-bottom: 1px solid #eaeded; }
.overview { margin-top: 22px; height: 189px; }
.stats { display: grid; grid-template-columns: 375.5px 375.5px 375px 1fr; padding-top: 16px; }
.stats > div { height: 88px; padding-left: 20px; border-right: 1px solid #eaeded; display: flex; flex-direction: column; align-items: flex-start; }
.stats > div:last-child { border: 0; }
label { display: flex; align-items: center; color: #545b64; height: 22px; white-space: nowrap; }
label svg { margin-right: 6px; }
label em { letter-spacing: .2px; margin-left: .5px; }
label u { text-decoration: none; border-bottom: 1px dashed #545b64; height: 24px; margin-top: 2px; }
.num { display: block; font-size: 44px; line-height: 44px; letter-spacing: .7px; border-bottom: 2px solid currentColor; height: 52px; margin-top: 6px; }
.num.up { margin-top: 5px; }
.num.down { margin-top: 9px; }
span.num { border: 0; }

.columns { display: grid; grid-template-columns: 740px 740.5px; justify-content: space-between; margin-top: 16px; }
.findings { height: 700px; }
.fhead { height: 82px; background: #fafafa; border-bottom: 1px solid #eaeded; padding: 17.500px 20px 0; }
.fhead h2 { word-spacing: 1.500px; }
.fhead p { font-size: 12px; color: #545b64; margin-top: 2px; letter-spacing: -.12px; }
.fbody { padding: 16px 20px; }
.sev { display: grid; grid-template-columns: repeat(4, 180px); }
.sev > div { display: flex; flex-direction: column; align-items: flex-start; }
.sev .num { margin-top: 6px; }
.badge { display: inline-block; height: 22px; line-height: 22px; border-radius: 11px; padding: 0 8px; font-size: 12px; letter-spacing: -.02px; color: #fff; }
.critical { background: #870303; }
.high { background: #ce3311; }
.medium { background: #f89256; color: #16191f; letter-spacing: -.25px; }
.low { background: #f2cd54; color: #16191f; }
.toggle { display: flex; align-items: center; width: 354px; height: 32px; border: 1px solid #545b64; border-radius: 2px; margin-top: 12px; padding-left: 3px; font-weight: 700; color: #545b64; letter-spacing: -.25px; }
.toggle b { width: 111px; height: 24px; line-height: 24px; text-align: center; background: #0073bb; color: #fff; border-radius: 2px; letter-spacing: -.4px; }
.toggle i { width: 1px; height: 14px; background: #545b64; margin: 0 19px 0 2px; }
.toggle span { display: flex; align-items: center; gap: 4px; }
.table { margin-top: 12px; }
.row { display: grid; grid-template-columns: 606px 94px; height: 62px; border-bottom: 1px solid #eaeded; align-items: center; }
.row > span { padding-left: 20px; }
.row > span:first-child { letter-spacing: -.18px; }
.row > span:first-child svg { display: inline-block; margin-right: 8px; vertical-align: 1px; }
.row a { border-bottom: 1px solid #0073bb; }
.row:last-child { align-items: start; padding-top: 9px; }
.row:last-child .badge { margin-top: 11px; }
.row .badge { vertical-align: middle; }
.th { height: 39px; background: #fafafa; color: #545b64; font-weight: 700; }
.th span + span { border-left: 1px solid #eaeded; height: 20px; line-height: 20px; letter-spacing: -.4px; }

.types { height: 415px; }
.pie { margin: 27px auto 25px; }
.legend { display: flex; flex-wrap: wrap; padding: 0 20px; column-gap: 16px; letter-spacing: -.17px; }
.legend span { display: flex; align-items: center; height: 26px; gap: 4px; }
.legend .full { width: 100%; }
.legend i { width: 14px; height: 14px; border-radius: 2px; }
.c1 { background: #688ae8; } .c2 { background: #c33d69; } .c3 { background: #2ea597; } .c4 { background: #8456ce; } .c5 { background: #e07941; }
.resources { margin-top: 16px; height: 200px; background: #fafafa; display: flex; align-items: flex-start; padding: 14px 20px; }
.resources h2 { flex: 1; margin-top: 4px; }
.rt { width: 154px; } .as { width: 113px; margin-left: 7px; }

.tools { width: 41px; flex: none; background: #fff; border-left: 1px solid #c5cbcc; }
.tools span { height: 41px; display: grid; place-items: center; border-bottom: 1px solid #d5dbdb; }
.tools span + span { border: 0; }

footer { height: 31px; flex: none; background: #232f3e; border-top: 1px solid #545b64; color: #fff; font-size: 12px; font-weight: 600; letter-spacing: -.3px; display: flex; align-items: center; padding-left: 14px; }
footer .cs { margin-left: 5px; width: 84px; }
.copy { margin-left: auto; width: 305px; letter-spacing: -.28px; }
.pr { width: 64px; } .te { width: 58px; } .ck { width: 119px; letter-spacing: -.5px; }

/* Windows taskbar */
.taskbar { height: 47px; flex: none; border-top: 1px solid #c3c9ca; display: flex; align-items: center; background: linear-gradient(90deg, #cdeedb 0, #ccf0e2 4%, #d3f0d8 10%, #d6efe2 18%, #e2ebe6 28%, #e6e7ea 38%, #ece7e6 46%, #f3e5dd 54%, #f3e4e0 60%, #f1e3da 66%, #f1e6c9 71%, #ece4dc 77%, #e6e1e6 86%, #e3e4ee 100%); }
.weather { width: 548px; display: flex; padding-left: 16px; }
.wicon { position: relative; width: 27px; height: 32px; padding-top: 12px; }
.wicon span { position: absolute; left: 12px; top: -1px; width: 16px; height: 16px; border-radius: 50%; background: #c42b1c; color: #fff; font-size: 11px; line-height: 15px; text-align: center; }
.weather p { font-size: 12px; line-height: 16px; margin-left: 6px; letter-spacing: 0; }
.weather small { font-size: 12px; color: #4f5f57; }
.tsearch { margin: 1px 4px 0 14px; width: 217px; height: 31px; border-radius: 16px; background: #fafbfa; box-shadow: 0 1px 1px #bbb; display: flex; align-items: center; padding: 0 2px 0 10px; }
.tsearch span { margin-left: 9px; flex: 1; color: #666; }
.apps-row { display: flex; height: 46px; }
.apps-row > span { position: relative; width: 44px; display: grid; place-items: center; }
.run::after { content: ""; position: absolute; left: 19px; bottom: 4px; width: 6px; height: 3px; border-radius: 2px; background: #857f7b; }
.active::before { content: ""; position: absolute; left: 3px; top: 4px; width: 38px; height: 38px; border-radius: 4px; background: #faf4ef; box-shadow: 0 0 1px #bbb; }
.apps-row svg { position: relative; }
.run.active::after { left: 14px; width: 16px; background: #27838f; }
.bdg { position: absolute; left: 23px; top: 6px; width: 16px; height: 16px; border-radius: 50%; background: #27818c; color: #fff; font: 11px/16px "Open Sans", sans-serif; text-align: center; }
.lt { background: #0097a7; }
.tray { display: flex; align-items: center; margin-left: auto; padding-right: 18px; font-size: 12px; }
.t2 { margin-left: 19px; } .t3 { margin-left: 15px; } .t4 { margin-left: 8px; } .t5 { margin-left: 8px; } .t6 { margin-left: 9px; }
.tray p { width: 71px; text-align: right; line-height: 16px; }
```
